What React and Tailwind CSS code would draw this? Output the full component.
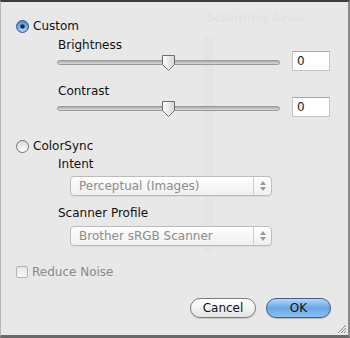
import React from "react";

const font = { fontFamily: '"DejaVu Sans", "Liberation Sans", sans-serif' };

function RadioOn() {
  return (
    <svg width="13" height="13" viewBox="0 0 13 13">
      <defs>
        <radialGradient id="rg1" cx="50%" cy="70%" r="60%">
          <stop offset="0%" stopColor="#bfe0fb" />
          <stop offset="100%" stopColor="#4f8fd6" />
        </radialGradient>
      </defs>
      <circle cx="6.5" cy="6.5" r="6" fill="url(#rg1)" stroke="#34558a" strokeWidth="1" />
      <circle cx="6.5" cy="6.5" r="2.3" fill="#1d2a3d" />
    </svg>
  );
}

function RadioOff() {
  return (
    <svg width="13" height="13" viewBox="0 0 13 13">
      <defs>
        <linearGradient id="rg2" x1="0" y1="0" x2="0" y2="1">
          <stop offset="0%" stopColor="#d8d8d8" />
          <stop offset="100%" stopColor="#ffffff" />
        </linearGradient>
      </defs>
      <circle cx="6.5" cy="6.5" r="6" fill="url(#rg2)" stroke="#6f6f6f" strokeWidth="1" />
    </svg>
  );
}

function Thumb() {
  return (
    <svg width="15" height="18" viewBox="0 0 15 18">
      <defs>
        <linearGradient id="tg" x1="0" y1="0" x2="1" y2="0">
          <stop offset="0%" stopColor="#ffffff" />
          <stop offset="100%" stopColor="#d6d6d6" />
        </linearGradient>
      </defs>
      <path d="M1.5 1.5 H13.5 V10.5 L7.5 16.5 L1.5 10.5 Z" fill="url(#tg)" stroke="#6e6e6e" strokeWidth="1" strokeLinejoin="round" />
    </svg>
  );
}

function Slider() {
  return (
    <div className="relative h-[20px] w-[223px] flex items-center">
      <div className="h-[5px] w-full rounded-full border border-[#9a9a9a] bg-gradient-to-b from-[#a9a9a9] to-[#dcdcdc]" />
      <div className="absolute left-[104px] top-[2px]">
        <Thumb />
      </div>
    </div>
  );
}

function SliderRow({ label }) {
  return (
    <div className="flex items-end">
      <div className="flex flex-col">
        <div className="h-[14px] leading-[14px] text-[12px] text-[#111] ml-[1px]">{label}</div>
        <Slider />
      </div>
      <div className="ml-[12px] mb-[1px] w-[38px] h-[20px] bg-white border border-[#c4c4c4] border-t-[#a8a8a8] flex items-center pl-[4px] text-[12px] text-[#222]">
        0
      </div>
    </div>
  );
}

function Popup({ text }) {
  return (
    <div className="w-[202px] h-[20px] rounded-[4px] border border-[#bcbcbc] bg-gradient-to-b from-[#ffffff] to-[#efefef] flex items-center shadow-[0_1px_0_#dadada]">
      <div className="flex-1 pl-[8px] text-[12px] text-[#8c8c8c] leading-[14px]">{text}</div>
      <div className="w-[18px] h-full border-l border-[#cfcfcf] flex flex-col items-center justify-center gap-[2px]">
        <svg width="6" height="4" viewBox="0 0 6 4"><path d="M3 0 L6 4 H0 Z" fill="#9a9a9a" /></svg>
        <svg width="6" height="4" viewBox="0 0 6 4"><path d="M0 0 H6 L3 4 Z" fill="#9a9a9a" /></svg>
      </div>
    </div>
  );
}

export default function App() {
  return (
    <div
      className="relative w-[350px] h-[338px] overflow-hidden bg-[#e8e8e8] border-t-2 border-t-[#3d3d3d] border-b-[3px] border-b-[#6a6a6a] border-r-2 border-r-[#8a8a8a] border-l border-l-[#b8b8b8]"
      style={font}
    >
      {/* faint background content showing through the sheet */}
      <div className="absolute left-[203px] top-[35px] w-[10px] h-[215px] bg-[#e4e4e4]" />
      <div className="absolute left-[205px] top-[7px] text-[12px] font-bold text-[#e2e2e2]">Scanning Area</div>

      <div className="relative flex flex-col pl-[15px]">
        {/* Custom */}
        <div className="mt-[17px] h-[14px] flex items-center gap-[4px]">
          <RadioOn />
          <span className="text-[12px] leading-[14px] text-[#111]">Custom</span>
        </div>

        <div className="ml-[41px] mt-[5px]">
          <SliderRow label="Brightness" />
        </div>
        <div className="ml-[41px] mt-[12px]">
          <SliderRow label="Contrast" />
        </div>

        {/* ColorSync */}
        <div className="mt-[21px] h-[14px] flex items-center gap-[4px]">
          <RadioOff />
          <span className="text-[12px] leading-[14px] text-[#111]">ColorSync</span>
        </div>

        <div className="ml-[42px] mt-[4px] h-[14px] leading-[14px] text-[12px] text-[#111]">Intent</div>
        <div className="ml-[54px] mt-[5px]">
          <Popup text="Perceptual (Images)" />
        </div>
        <div className="ml-[42px] mt-[10px] h-[14px] leading-[14px] text-[12px] text-[#111]">Scanner Profile</div>
        <div className="ml-[54px] mt-[6px]">
          <Popup text="Brother sRGB Scanner" />
        </div>

        {/* Reduce Noise */}
        <div className="mt-[19px] h-[14px] flex items-center gap-[4px]">
          <div className="w-[12px] h-[12px] rounded-[2px] border border-[#b4b4b4] bg-gradient-to-b from-[#e6e6e6] to-[#fafafa]" />
          <span className="text-[12px] leading-[14px] text-[#8a8a8a]">Reduce Noise</span>
        </div>

        {/* Buttons */}
        <div className="mt-[19px] flex justify-end gap-[10px] pr-[17px]">
          <div className="w-[66px] h-[20px] rounded-full border border-[#7d7d7d] bg-gradient-to-b from-[#ffffff] via-[#f2f2f2] to-[#e2e2e2] flex items-center justify-center text-[12px] text-[#111] shadow-[0_1px_1px_rgba(0,0,0,0.15)]">
            Cancel
          </div>
          <div className="w-[65px] h-[20px] rounded-full border border-[#3e5f8f] bg-gradient-to-b from-[#b5d6f7] via-[#6aa6e6] to-[#8cc1f0] flex items-center justify-center text-[12px] text-[#111] shadow-[0_1px_1px_rgba(0,0,0,0.2)]">
            OK
          </div>
        </div>
      </div>

      {/* resize grip */}
      <svg className="absolute right-[1px] bottom-[1px]" width="11" height="11" viewBox="0 0 11 11">
        <path d="M10 2 L2 10 M10 5 L5 10 M10 8 L8 10" stroke="#8a8a8a" strokeWidth="1" />
      </svg>
    </div>
  );
}
